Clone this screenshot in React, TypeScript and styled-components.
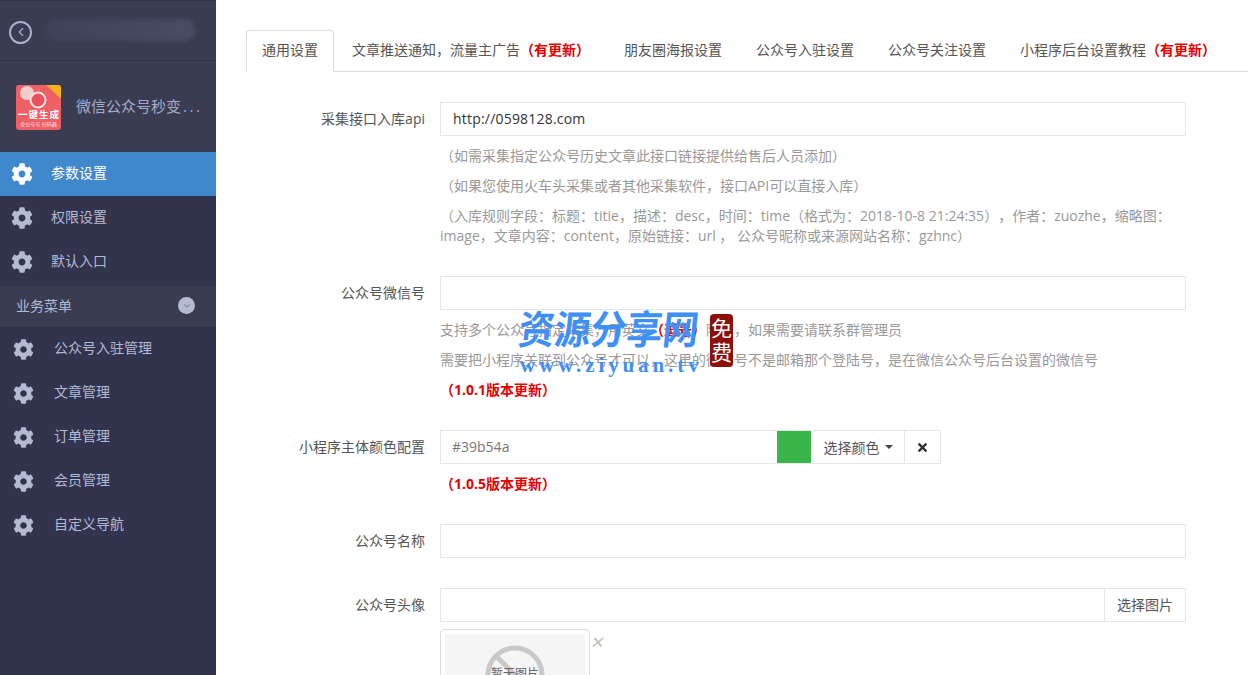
import React from 'react';
import styled, { createGlobalStyle } from 'styled-components';
import { FaCog, FaTimes } from 'react-icons/fa';
import { ChevronDown, ChevronLeft } from 'lucide-react';

const GlobalStyle = createGlobalStyle`
  html, body {
    margin: 0;
    height: 100%;
    overflow: hidden;
    background: #fff;
  }
  body {
    font-family: "Open Sans", "Noto Sans CJK SC", sans-serif;
    font-size: 14px;
    color: #555;
    text-spacing-trim: space-all;
  }
  * { box-sizing: border-box; }
`;

const MAIN_MENU = [
  { label: '参数设置', active: true },
  { label: '权限设置' },
  { label: '默认入口' },
];

const BUSINESS_MENU = ['公众号入驻管理', '文章管理', '订单管理', '会员管理', '自定义导航'];

const TABS = [
  { label: '通用设置', active: true },
  { label: '文章推送通知，流量主广告', update: true },
  { label: '朋友圈海报设置' },
  { label: '公众号入驻设置' },
  { label: '公众号关注设置' },
  { label: '小程序后台设置教程', update: true },
];

const AppLogo = () => (
  <LogoBox>
    <svg width="45" height="45" viewBox="0 0 45 45">
      <rect width="45" height="45" rx="3" fill="#ee5f66" />
      <path d="M30 0H42Q45 0 45 3V14Z" fill="#f5b21f" />
      <circle cx="11" cy="8" r="7" fill="#f2cccc" />
      <circle cx="22" cy="15" r="7.5" fill="#e9535b" stroke="#f6e4e4" strokeWidth="2" />
      <text x="23" y="33" textAnchor="middle" fontSize="9.5" fontWeight="700" letterSpacing="1" fill="#fff">一键生成</text>
      <text x="22.5" y="41" textAnchor="middle" fontSize="5" fill="#ffe6e6">全公号号 扫码器</text>
    </svg>
  </LogoBox>
);

const BlockedImage = () => (
  <svg width="60" height="60" viewBox="0 0 60 60">
    <circle cx="30" cy="30" r="27" fill="none" stroke="#c9c9c9" strokeWidth="5" />
    <path d="M11 11L49 49" stroke="#c9c9c9" strokeWidth="5" />
  </svg>
);

const App = () => (
  <>
    <GlobalStyle />
    <Page>
      <Sidebar>
        <TopBar>
          <BackButton>
            <ChevronLeft size={14} strokeWidth={2} />
          </BackButton>
          <BlurredTitle />
        </TopBar>
        <AppInfo>
          <AppLogo />
          <AppName>
            微信公众号秒变<Dots>...</Dots>
          </AppName>
        </AppInfo>
        <MainMenu>
          {MAIN_MENU.map((item) => (
            <MenuItem key={item.label} $active={item.active}>
              <FaCog size={22} />
              <span>{item.label}</span>
            </MenuItem>
          ))}
        </MainMenu>
        <GroupHeader>
          <span>业务菜单</span>
          <GroupToggle>
            <ChevronDown size={10} strokeWidth={1.5} />
          </GroupToggle>
        </GroupHeader>
        {BUSINESS_MENU.map((label) => (
          <SubItem key={label}>
            <FaCog size={21} />
            <span>{label}</span>
          </SubItem>
        ))}
      </Sidebar>

      <Main>
        <TabBar>
          {TABS.map((tab) => (
            <Tab key={tab.label} $active={tab.active}>
              {tab.label}
              {tab.update && <Red>（有更新）</Red>}
            </Tab>
          ))}
        </TabBar>

        <Form>
          <Row>
            <Label>采集接口入库api</Label>
            <Field>
              <Input>http://0598128.com</Input>
              <Help>（如需采集指定公众号历史文章此接口链接提供给售后人员添加）</Help>
              <Help>（如果您使用火车头采集或者其他采集软件，接口API可以直接入库）</Help>
              <Help>
                （入库规则字段：标题：titie，描述：desc，时间：time（格式为：2018-10-8 21:24:35），作者：zuozhe，缩略图：image，文章内容：content，原始链接：url ， 公众号昵称或来源网站名称：gzhnc）
              </Help>
            </Field>
          </Row>

          <Row>
            <Label>公众号微信号</Label>
            <Field>
              <Input />
              <Help>
                支持多个公众号指定采集，用英文<Red>（逗号）</Red>隔开，如果需要请联系群管理员
              </Help>
              <Help>需要把小程序关联到公众号才可以，这里的微信号不是邮箱那个登陆号，是在微信公众号后台设置的微信号</Help>
              <Help>
                <Red>（1.0.1版本更新）</Red>
              </Help>
            </Field>
          </Row>

          <Row>
            <Label>小程序主体颜色配置</Label>
            <Field>
              <ColorGroup>
                <ColorInput>#39b54a</ColorInput>
                <ColorSwatch />
                <AddonButton>
                  选择颜色
                  <Caret />
                </AddonButton>
                <ClearButton>
                  <FaTimes size={13} />
                </ClearButton>
              </ColorGroup>
              <Help>
                <Red>（1.0.5版本更新）</Red>
              </Help>
            </Field>
          </Row>

          <Row>
            <Label>公众号名称</Label>
            <Field>
              <Input />
            </Field>
          </Row>

          <Row>
            <Label>公众号头像</Label>
            <Field>
              <ImageGroup>
                <ImagePath />
                <ImageButton>选择图片</ImageButton>
              </ImageGroup>
              <PreviewWrap>
                <Preview>
                  <PreviewInner>
                    <BlockedImage />
                    <PreviewText>暂无图片</PreviewText>
                  </PreviewInner>
                </Preview>
                <RemoveMark>×</RemoveMark>
              </PreviewWrap>
            </Field>
          </Row>
        </Form>

        <Watermark>
          <WatermarkTitle>资源分享网</WatermarkTitle>
          <WatermarkUrl>www.ziyuan.tv</WatermarkUrl>
          <Seal>免费</Seal>
        </Watermark>
      </Main>
    </Page>
  </>
);

export default App;

const Page = styled.div`
  display: flex;
  width: 1248px;
  height: 675px;
  overflow: hidden;
`;

const Sidebar = styled.aside`
  flex: 0 0 216px;
  background: #32344e;
  color: #b4bad2;
`;

const TopBar = styled.div`
  display: flex;
  align-items: center;
  gap: 13px;
  height: 61px;
  padding: 3px 9px 0;
  background: #3a3c51;
  border-top: 1px solid #2f3147;
  border-bottom: 1px solid #2f3147;
`;

const BackButton = styled.div`
  display: flex;
  align-items: center;
  justify-content: center;
  width: 23px;
  height: 23px;
  border: 2px solid #a9b0cc;
  border-radius: 50%;
  color: #a9b0cc;
`;

const BlurredTitle = styled.div`
  width: 150px;
  height: 22px;
  margin-top: -5px;
  background: linear-gradient(90deg, #3f4159, #4a4c64);
  border-radius: 10px;
  filter: blur(2px);
`;

const AppInfo = styled.div`
  display: flex;
  align-items: center;
  gap: 15px;
  height: 91px;
  padding: 2px 0 0 16px;
  background: #3a3c51;
`;

const LogoBox = styled.div`
  width: 45px;
  height: 45px;
  font-size: 0;
`;

const AppName = styled.div`
  padding-bottom: 5px;
  font-size: 15px;
  color: #a4abc8;
  white-space: nowrap;
`;

const Dots = styled.span`
  margin-left: 2px;
  letter-spacing: 2.5px;
`;

const MainMenu = styled.div`
  padding-bottom: 2px;
`;

const MenuItem = styled.div<{ $active?: boolean }>`
  display: flex;
  align-items: center;
  gap: 18px;
  height: 44px;
  padding-left: 11px;
  font-size: 14px;
  color: ${({ $active }) => ($active ? '#fff' : '#b4bad2')};
  background: ${({ $active }) => ($active ? '#3f88cc' : 'transparent')};

  span {
    margin-bottom: 5px;
  }
`;

const GroupHeader = styled.div`
  display: flex;
  align-items: center;
  justify-content: space-between;
  height: 41px;
  padding: 0 21px 0 16px;
  background: #3a3c51;
  font-size: 14px;
  color: #b4bad2;

  span {
    margin-bottom: 4px;
  }
`;

const GroupToggle = styled.div`
  display: flex;
  align-items: center;
  justify-content: center;
  width: 17px;
  height: 17px;
  margin-bottom: 2px;
  border-radius: 50%;
  background: #b4bad2;
  color: #3a3c51;
`;

const SubItem = styled.div`
  display: flex;
  align-items: center;
  gap: 20px;
  height: 44px;
  padding-left: 13px;
  font-size: 14px;
  color: #b4bad2;

  span {
    margin-bottom: 5px;
  }
`;

const Main = styled.main`
  position: relative;
  flex: 1;
  min-width: 0;
  padding: 30px 0 0 30px;
`;

const TabBar = styled.div`
  display: flex;
  height: 42px;
  border-bottom: 1px solid #ddd;
`;

const Tab = styled.div<{ $active?: boolean }>`
  height: ${({ $active }) => ($active ? '42px' : '41px')};
  padding: 0 15px;
  margin-right: 2px;
  line-height: 37px;
  font-size: 14px;
  color: #555;
  white-space: nowrap;
  background: #fff;
  border: 1px solid ${({ $active }) => ($active ? '#ddd' : 'transparent')};
  border-bottom-color: ${({ $active }) => ($active ? '#fff' : 'transparent')};
  border-radius: 4px 4px 0 0;
`;

const Red = styled.span`
  font-weight: 700;
  color: #e60000;
`;

const Form = styled.div`
  display: flex;
  flex-direction: column;
  gap: 30px;
  padding-top: 30px;
`;

const Row = styled.div`
  display: grid;
  grid-template-columns: 179px 746px;
  column-gap: 15px;
`;

const Label = styled.label`
  padding-top: 7px;
  line-height: 20px;
  font-size: 14px;
  text-align: right;
  color: #555;
`;

const Field = styled.div`
  min-width: 0;
`;

const Input = styled.div`
  height: 34px;
  padding: 0 12px;
  line-height: 32px;
  font-size: 14px;
  letter-spacing: 0.2px;
  color: #333;
  border: 1px solid #e5e6e7;
`;

const Help = styled.p`
  margin: 10px 0 0;
  line-height: 20px;
  font-size: 14px;
  color: #999;
`;

const ColorGroup = styled.div`
  display: flex;
  width: 501px;
  height: 34px;
  border: 1px solid #e5e6e7;
`;

const ColorInput = styled.div`
  width: 336px;
  padding: 0 11px;
  line-height: 32px;
  color: #777;
`;

const ColorSwatch = styled.div`
  width: 34px;
  background: #39b54a;
`;

const AddonButton = styled.div`
  display: flex;
  align-items: center;
  justify-content: center;
  gap: 5px;
  width: 94px;
  padding: 0 0 1px 1px;
  color: #555;
  border-right: 1px solid #e5e6e7;
`;

const Caret = styled.span`
  width: 0;
  height: 0;
  border-top: 4px solid #444;
  border-left: 4px solid transparent;
  border-right: 4px solid transparent;
`;

const ClearButton = styled.div`
  display: flex;
  flex: 1;
  align-items: center;
  justify-content: center;
  color: #333;
`;

const ImageGroup = styled.div`
  display: flex;
  height: 34px;
  border: 1px solid #e5e6e7;
`;

const ImagePath = styled.div`
  flex: 1;
`;

const ImageButton = styled.div`
  width: 81px;
  line-height: 32px;
  text-align: center;
  color: #555;
  border-left: 1px solid #e5e6e7;
`;

const PreviewWrap = styled.div`
  position: relative;
  width: 150px;
  margin-top: 7px;
`;

const Preview = styled.div`
  height: 150px;
  padding: 4px;
  border: 1px solid #ddd;
  border-radius: 4px;
`;

const PreviewInner = styled.div`
  position: relative;
  display: flex;
  justify-content: center;
  height: 140px;
  padding-top: 11px;
  background: #f5f5f5;
`;

const PreviewText = styled.span`
  position: absolute;
  top: 30px;
  left: 0;
  right: 0;
  text-align: center;
  font-size: 12px;
  color: #666;
`;

const RemoveMark = styled.span`
  position: absolute;
  top: 0;
  right: -15px;
  font-size: 22px;
  line-height: 24px;
  color: #bbb;
  transform: skewX(-12deg);
`;

const Watermark = styled.div`
  position: absolute;
  left: 303px;
  top: 298px;
  width: 220px;
  height: 80px;
`;

const WatermarkTitle = styled.div`
  position: absolute;
  left: 0;
  top: 2px;
  font-size: 36px;
  line-height: 52px;
  font-weight: 700;
  font-family: "Noto Sans CJK SC", sans-serif;
  color: #3f90f5;
  white-space: nowrap;
  transform: skewX(-6deg) scaleY(1.1);
`;

const WatermarkUrl = styled.div`
  position: absolute;
  left: 1px;
  top: 55px;
  font-family: "Liberation Serif", serif;
  font-size: 21px;
  line-height: 24px;
  font-weight: 700;
  letter-spacing: 3.9px;
  color: #3f90f5;
  white-space: nowrap;
`;

const Seal = styled.div`
  position: absolute;
  left: 191px;
  top: 16px;
  width: 23px;
  height: 53px;
  padding-top: 2px;
  background: #8c0f0a;
  border-radius: 4px;
  font-size: 21px;
  line-height: 24px;
  text-align: center;
  color: #fff;
  word-break: break-all;
`;
